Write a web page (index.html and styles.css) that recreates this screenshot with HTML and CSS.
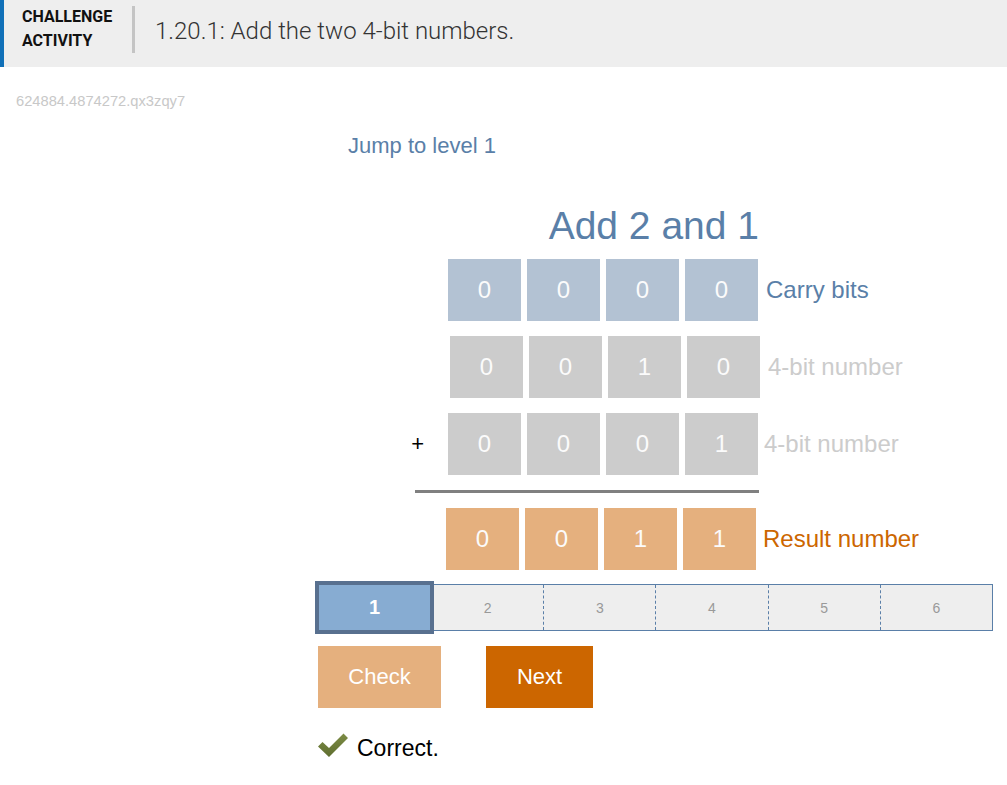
FILE: index.html
```html
<!DOCTYPE html>
<html lang="en">
<head>
<meta charset="utf-8">
<title>Challenge activity 1.20.1</title>
<link rel="stylesheet" href="styles.css">
</head>
<body>
<header class="hdr">
  <div class="hdr-label">CHALLENGE<br>ACTIVITY</div>
  <div class="hdr-divider"></div>
  <h1 class="hdr-title">1.20.1: Add the two 4-bit numbers.</h1>
</header>

<p class="act-id">624884.4874272.qx3zqy7</p>

<main class="activity">
  <div class="jump">Jump to level 1</div>

  <h2 class="prob-title">Add 2 and 1</h2>

  <div class="row row-carry">
    <span class="sign"></span>
    <span class="box box-carry">0</span>
    <span class="box box-carry">0</span>
    <span class="box box-carry">0</span>
    <span class="box box-carry">0</span>
    <span class="lbl lbl-blue">Carry bits</span>
  </div>

  <div class="row row-num1">
    <span class="sign"></span>
    <span class="box box-gray">0</span>
    <span class="box box-gray">0</span>
    <span class="box box-gray">1</span>
    <span class="box box-gray">0</span>
    <span class="lbl lbl-gray">4-bit number</span>
  </div>

  <div class="row row-num2">
    <span class="sign">+</span>
    <span class="box box-gray">0</span>
    <span class="box box-gray">0</span>
    <span class="box box-gray">0</span>
    <span class="box box-gray">1</span>
    <span class="lbl lbl-gray lbl-tight">4-bit number</span>
  </div>

  <div class="sum-line"></div>

  <div class="row row-result">
    <span class="sign"></span>
    <span class="box box-result">0</span>
    <span class="box box-result">0</span>
    <span class="box box-result">1</span>
    <span class="box box-result">1</span>
    <span class="lbl lbl-orange">Result number</span>
  </div>

  <div class="levels">
    <div class="lvl lvl-current">1</div>
    <div class="lvl lvl-first">2</div>
    <div class="lvl">3</div>
    <div class="lvl">4</div>
    <div class="lvl">5</div>
    <div class="lvl">6</div>
  </div>

  <div class="buttons">
    <button class="btn btn-check">Check</button>
    <button class="btn btn-next">Next</button>
  </div>

  <div class="feedback">
    <svg class="check-icon" width="30" height="24" viewBox="0 0 30 24" aria-hidden="true">
      <defs>
        <linearGradient id="chk" x1="0" y1="0" x2="0" y2="1">
          <stop offset="0" stop-color="#7d8c45"/>
          <stop offset="1" stop-color="#5f6e30"/>
        </linearGradient>
      </defs>
      <polygon points="0,13.5 4.5,9 11,15 25.5,0.5 30,5 11,24" fill="url(#chk)"/>
    </svg>
    <span class="feedback-text">Correct.</span>
  </div>
</main>
</body>
</html>
```

FILE: styles.css
```css
html, body {
  margin: 0;
  padding: 0;
  background: #ffffff;
}

body {
  font-family: "Liberation Sans", Arial, sans-serif;
  color: #000;
}

/* Header */
.hdr {
  display: flex;
  align-items: flex-start;
  height: 67px;
  box-sizing: border-box;
  padding: 5px 0 0 18px;
  background: #eeeeee;
  border-left: 4px solid #1070b8;
}

.hdr-label {
  width: 110px;
  font-family: Roboto, "Liberation Sans", sans-serif;
  font-weight: 700;
  font-size: 16px;
  line-height: 24px;
  color: #111;
}

.hdr-divider {
  width: 3px;
  height: 47px;
  margin-top: 1px;
  background: #c4c4c4;
}

.hdr-title {
  margin: 0 0 0 20px;
  padding-top: 2px;
  font-family: Roboto, "Liberation Sans", sans-serif;
  font-weight: 300;
  font-size: 24px;
  line-height: 48px;
  color: #333;
}

/* Activity id */
.act-id {
  margin: 24px 0 0 0;
  padding-left: 16px;
  font-size: 14.7px;
  line-height: 20px;
  color: #c8c8c8;
}

/* Main activity */
.activity {
  margin-left: 316px;
  width: 677px;
}

.jump {
  margin-top: 22px;
  padding-left: 32px;
  font-size: 22px;
  line-height: 26px;
  color: #5a7fa8;
}

.prob-title {
  margin: 45px 0 0 0;
  width: 443px;
  text-align: right;
  font-weight: 400;
  font-size: 39px;
  line-height: 44px;
  color: #5a7fa8;
}

.row {
  display: flex;
  align-items: center;
  gap: 6px;
  margin-top: 15px;
}

.row-carry {
  margin-top: 11px;
}

.sign {
  width: 126px;
  box-sizing: border-box;
  padding-right: 18px;
  text-align: right;
  font-size: 22px;
  color: #000;
}

.row-num1 .sign { width: 128px; }
.row-result .sign { width: 124px; }

.box {
  width: 73px;
  height: 62px;
  display: flex;
  align-items: center;
  justify-content: center;
  font-size: 24px;
  color: #fbfbfb;
}

.box-carry { background: #b3c2d3; }
.box-gray { background: #cccccc; }
.box-result { background: #e5b07e; }

.lbl {
  margin-left: 2px;
  font-size: 24px;
  white-space: nowrap;
}

.lbl-tight { margin-left: 0; }

.lbl-blue { color: #5a7fa8; }
.lbl-gray { color: #cccccc; }
.lbl-orange { color: #cc6600; margin-left: 1px; }

.sum-line {
  margin: 15px 0 0 99px;
  width: 344px;
  height: 3px;
  background: #808080;
}

/* Level bar */
.levels {
  display: flex;
  margin-top: 14px;
  height: 47px;
  box-sizing: border-box;
  border: 1px solid #5a7fa8;
  background: #eeeeee;
}

.lvl {
  flex: 1 1 0;
  display: flex;
  align-items: center;
  justify-content: center;
  border-left: 1px dashed #5a7fa8;
  font-size: 14px;
  color: #999999;
}

.lvl-first {
  border-left: none;
}

.lvl-current {
  flex: 0 0 auto;
  position: relative;
  z-index: 1;
  width: 119px;
  box-sizing: border-box;
  margin: -4px -2px -4px -2px;
  border: 4px solid #58708f;
  background: #87acd2;
  color: #ffffff;
  font-size: 20px;
  font-weight: 700;
}

/* Buttons */
.buttons {
  display: flex;
  gap: 45px;
  margin: 15px 0 0 2px;
}

.btn {
  height: 62px;
  border: none;
  padding: 0;
  font-family: "Liberation Sans", Arial, sans-serif;
  font-size: 22px;
  color: #ffffff;
}

.btn-check {
  width: 123px;
  background: #e5b07e;
}

.btn-next {
  width: 107px;
  background: #cc6600;
}

/* Feedback */
.feedback {
  display: flex;
  align-items: center;
  gap: 9px;
  margin: 27px 0 0 2px;
}

.check-icon {
  display: block;
  margin-top: -6px;
}

.feedback-text {
  font-size: 23px;
  line-height: 26px;
  color: #000;
}
```
